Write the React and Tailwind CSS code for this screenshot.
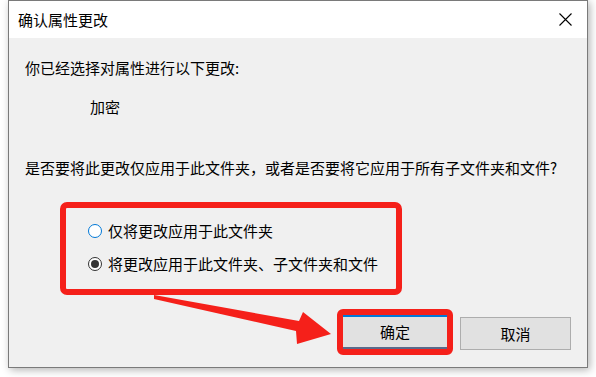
import React from 'react';

const font = { fontFamily: '"Noto Sans CJK SC", "Noto Sans", sans-serif' };

const Radio = ({ checked, label }) => (
  <label className="flex items-center h-[20px] leading-[20px]">
    <span
      className={`w-[14px] h-[14px] rounded-full bg-white border flex items-center justify-center ${
        checked ? 'border-[#333333]' : 'border-[#0078d7]'
      }`}
    >
      {checked && <span className="w-[8px] h-[8px] rounded-full bg-[#333333]" />}
    </span>
    <span className="ml-[6px]">{label}</span>
  </label>
);

const App = () => {
  return (
    <div className="relative w-[596px] h-[377px] bg-white overflow-hidden text-black text-[15px]" style={font}>
      <div className="ml-[8px] w-[580px] h-[368px] border border-[#7a7a7a] flex flex-col shadow-[2px_2px_8px_rgba(0,0,0,0.3)]">
        {/* Title bar */}
        <div className="h-[37px] bg-white flex items-center justify-between pl-[9px] pr-[15px]">
          <span className="leading-[20px]">确认属性更改</span>
          <svg width="13" height="13" viewBox="0 0 13 13" className="text-black">
            <path d="M0.5 0.5 L12.5 12.5 M12.5 0.5 L0.5 12.5" stroke="currentColor" strokeWidth="1.1" />
          </svg>
        </div>

        {/* Body */}
        <div className="flex-1 bg-[#f0f0f0] px-[16px] flex flex-col">
          <p className="mt-[20px] leading-[20px]">你已经选择对属性进行以下更改:</p>
          <p className="mt-[19px] ml-[65px] leading-[20px]">加密</p>
          <p className="mt-[41px] leading-[20px]">是否要将此更改仅应用于此文件夹，或者是否要将它应用于所有子文件夹和文件?</p>

          <div className="mt-[24px] ml-[35px] w-[342px] h-[93px] border-[6px] border-[#f5201a] rounded-[7px] pl-[22px] pt-[13px] flex flex-col gap-[13px]">
            <Radio label="仅将更改应用于此文件夹" />
            <Radio checked label="将更改应用于此文件夹、子文件夹和文件" />
          </div>

          <div className="mt-[14px] flex justify-end items-start gap-[7px]">
            <div className="w-[116px] h-[46px] border-[6px] border-[#f5201a] rounded-[6px] bg-[#f5201a] flex">
              <button className="flex-1 bg-[#e1e1e1] border-t-2 border-b-2 border-t-[#0078d7] border-b-[#5a6a8a] leading-[20px]">
                确定
              </button>
            </div>
            <button className="mt-[8px] w-[111px] h-[33px] bg-[#e1e1e1] border border-[#adadad] leading-[20px]">
              取消
            </button>
          </div>
        </div>
      </div>

      {/* annotation arrow */}
      <svg className="absolute left-0 top-0" width="596" height="377" viewBox="0 0 596 377">
        <polygon
          points="154,295 299,321 303,312 331,334 297,344 296,331 154,299"
          fill="#f5201a"
        />
      </svg>
    </div>
  );
};

export default App;
